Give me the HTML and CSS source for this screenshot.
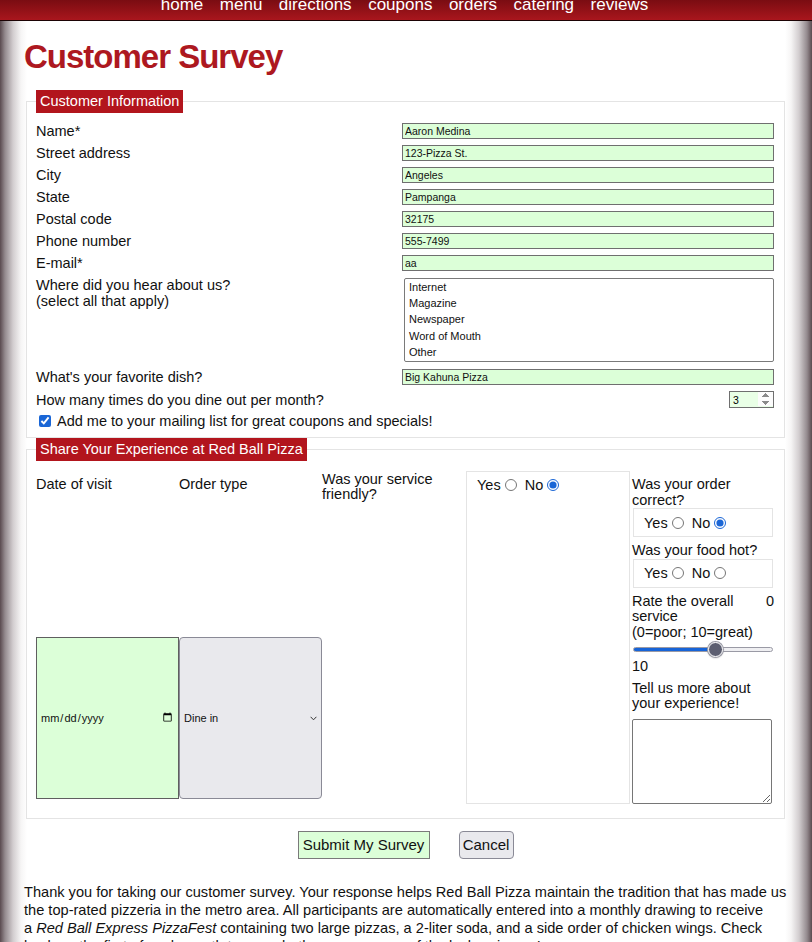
FILE: index.html
```html
<!DOCTYPE html>
<html lang="en">
<head>
<meta charset="utf-8">
<title>Customer Survey - Red Ball Pizza</title>
<link rel="stylesheet" href="styles.css">
</head>
<body>
<nav class="topnav">
  <a href="#">home</a>
  <a href="#">menu</a>
  <a href="#">directions</a>
  <a href="#">coupons</a>
  <a href="#">orders</a>
  <a href="#">catering</a>
  <a href="#">reviews</a>
</nav>
<main class="page">
  <h1 class="title">Customer Survey</h1>
  <form class="survey">
    <fieldset class="box info">
      <legend class="legend">Customer Information</legend>
      <div class="grid">
        <label class="lbl" for="f-name">Name*</label>
        <input class="txt" id="f-name" type="text" value="Aaron Medina">
        <label class="lbl" for="f-street">Street address</label>
        <input class="txt" id="f-street" type="text" value="123-Pizza St.">
        <label class="lbl" for="f-city">City</label>
        <input class="txt" id="f-city" type="text" value="Angeles">
        <label class="lbl" for="f-state">State</label>
        <input class="txt" id="f-state" type="text" value="Pampanga">
        <label class="lbl" for="f-zip">Postal code</label>
        <input class="txt" id="f-zip" type="text" value="32175">
        <label class="lbl" for="f-phone">Phone number</label>
        <input class="txt" id="f-phone" type="text" value="555-7499">
        <label class="lbl" for="f-mail">E-mail*</label>
        <input class="txt" id="f-mail" type="text" value="aa">
        <label class="lbl lbl-top" for="f-hear">Where did you hear about us?<br>(select all that apply)</label>
        <select class="list" id="f-hear" multiple size="5">
          <option>Internet</option>
          <option>Magazine</option>
          <option>Newspaper</option>
          <option>Word of Mouth</option>
          <option>Other</option>
        </select>
        <label class="lbl" for="f-dish">What's your favorite dish?</label>
        <input class="txt" id="f-dish" type="text" value="Big Kahuna Pizza">
        <label class="lbl" for="f-times">How many times do you dine out per month?</label>
        <input class="num" id="f-times" type="number" value="3" min="0">
      </div>
      <label class="check"><input type="checkbox" checked><span>Add me to your mailing list for great coupons and specials!</span></label>
    </fieldset>

    <fieldset class="box exp">
      <legend class="legend">Share Your Experience at Red Ball Pizza</legend>
      <div class="exp-grid">
        <div class="col-field">
          <label class="flbl" for="f-date">Date of visit</label>
          <input class="date" id="f-date" type="date">
        </div>
        <div class="col-field">
          <label class="flbl" for="f-type">Order type</label>
          <div class="sel-wrap">
            <select class="sel" id="f-type">
              <option>Dine in</option>
              <option>Carry out</option>
              <option>Delivery</option>
            </select>
            <svg class="chev" width="7" height="5" viewBox="0 0 7 5" aria-hidden="true"><path d="M0.6 0.8 L3.5 3.8 L6.4 0.8" fill="none" stroke="#333" stroke-width="1"/></svg>
          </div>
        </div>
        <div class="col-q">
          <span class="qlbl">Was your service friendly?</span>
        </div>
        <div class="radio-box">
          <div class="yn">
            <label class="opt"><span>Yes</span><input type="radio" name="friendly"></label>
            <label class="opt"><span>No</span><input type="radio" name="friendly" checked></label>
          </div>
        </div>
        <div class="side">
          <p class="q">Was your order correct?</p>
          <div class="mini">
            <div class="yn">
              <label class="opt"><span>Yes</span><input type="radio" name="correct"></label>
              <label class="opt"><span>No</span><input type="radio" name="correct" checked></label>
            </div>
          </div>
          <p class="q gap">Was your food hot?</p>
          <div class="mini">
            <div class="yn">
              <label class="opt"><span>Yes</span><input type="radio" name="hot"></label>
              <label class="opt"><span>No</span><input type="radio" name="hot"></label>
            </div>
          </div>
          <p class="q gap"><span class="minv">0</span>Rate the overall service<br>(0=poor; 10=great)</p>
          <input class="range" type="range" min="0" max="10" value="6" style="--fill: 60%">
          <p class="q maxv">10</p>
          <label class="q tell" for="f-more">Tell us more about your experience!</label>
          <textarea class="area" id="f-more"></textarea>
        </div>
      </div>
    </fieldset>

    <div class="actions">
      <button class="btn submit" type="submit">Submit My Survey</button>
      <button class="btn cancel" type="reset">Cancel</button>
    </div>
  </form>

  <p class="thanks">Thank you for taking our customer survey. Your response helps Red Ball Pizza maintain the tradition that has made us the top-rated pizzeria in the metro area. All participants are automatically entered into a monthly drawing to receive a&nbsp;<em>Red Ball Express PizzaFest</em> containing two large pizzas, a 2-liter soda, and a side order of chicken wings. Check back on the first of each month to see whether you are one of the lucky winners!</p>
</main>
</body>
</html>
```

FILE: styles.css
```css
* {
  box-sizing: border-box;
}

html,
body {
  margin: 0;
}

body {
  font-family: "Liberation Sans", Arial, sans-serif;
  font-size: 14.5px;
  color: #111;
  min-height: 942px;
  background: linear-gradient(to right,
    #5a4a4f 0,
    #948a8e 5px,
    #d2cdcf 13px,
    #f6f5f5 21px,
    #fff 27px,
    #fff calc(100% - 27px),
    #f6f5f5 calc(100% - 21px),
    #d2cdcf calc(100% - 13px),
    #948a8e calc(100% - 5px),
    #5a4a4f 100%);
}

/* top navigation */
.topnav {
  height: 21px;
  display: flex;
  justify-content: center;
  gap: 16.5px;
  overflow: hidden;
  background: linear-gradient(#7a0c12, #a9161d);
  border-bottom: 1px solid #1c0304;
  padding-right: 3px;
}

.topnav a {
  color: #fff;
  text-decoration: none;
  font-size: 17px;
  line-height: 9px;
}

/* page */
.page {
  padding: 0 25px 0 24px;
}

.title {
  margin: 18px 0 15px;
  font: bold 33px/36px "Liberation Sans", Arial, sans-serif;
  letter-spacing: -1px;
  color: #ad1820;
}

/* fieldsets */
.box {
  margin: 0 2px;
  padding: 10px 10px 8px 9px;
  border: 1px solid #e4e4e4;
  min-width: 0;
}

.legend {
  background: #b2151d;
  color: #fff;
  padding: 0 4px;
  font-size: 14.5px;
  line-height: 23px;
}

/* customer information */
.grid {
  display: grid;
  grid-template-columns: 1fr 372px;
  row-gap: 6px;
  align-items: center;
}

.lbl {
  line-height: 16px;
}

.lbl-top {
  align-self: start;
}

.txt {
  display: block;
  width: 100%;
  height: 16px;
  margin: 0;
  padding: 0 2px;
  border: 1px solid #6f6f6f;
  background: #dcffd8;
  font: 10.5px "Liberation Sans", Arial, sans-serif;
  color: #111;
}

.list {
  justify-self: end;
  width: 370px;
  height: 84px;
  margin: 1px 0;
  padding: 0 2px;
  border: 1px solid #7a7a7a;
  border-radius: 2px;
  background: #fff;
  font: 11px "Liberation Sans", Arial, sans-serif;
  color: #111;
  overflow: hidden;
}

.list option {
  padding: 2.1px 2px;
}

.num {
  justify-self: end;
  width: 45px;
  height: 17px;
  margin: 0;
  padding: 0 0 0 3px;
  border: 1px solid #6f6f6f;
  background: #e9ffe6;
  font: 10.5px "Liberation Sans", Arial, sans-serif;
}

.num::-webkit-inner-spin-button {
  opacity: 1;
  height: 15px;
}

.check {
  display: flex;
  align-items: center;
  margin-top: 5px;
  line-height: 16px;
}

.check input {
  width: 12px;
  height: 12px;
  margin: 0 6px 0 3px;
  accent-color: #1a66d6;
}

/* experience */
.exp {
  padding-bottom: 14px;
}

.exp-grid {
  display: grid;
  grid-template-columns: 143px 143px 144px 164px 1fr;
}

.col-field {
  display: flex;
  flex-direction: column;
  justify-content: space-between;
}

.flbl {
  padding-top: 5px;
  line-height: 16px;
}

.date {
  display: block;
  width: 143px;
  height: 162px;
  margin: 0 0 5px;
  padding: 0 3px;
  border: 1px solid #5f5f5f;
  background: #dcffd8;
  font: 11px "Liberation Sans", Arial, sans-serif;
  color: #111;
}

.sel-wrap {
  position: relative;
  margin: 0 0 5px;
}

.sel {
  -webkit-appearance: none;
  appearance: none;
  display: block;
  width: 143px;
  height: 162px;
  margin: 0;
  padding: 0 0 0 4px;
  border: 1px solid #8a8a96;
  border-radius: 4px;
  background-color: #e9e9ed;
  font: 11px "Liberation Sans", Arial, sans-serif;
  color: #111;
}

.chev {
  position: absolute;
  right: 5px;
  top: 79px;
  pointer-events: none;
}

.col-q {
  padding-top: 1px;
}

.qlbl {
  display: block;
  line-height: 15px;
}

.radio-box {
  border: 1px solid #e4e4e4;
  padding: 5px 10px;
}

.yn {
  display: flex;
  align-items: center;
  line-height: 16px;
}

.opt {
  display: flex;
  align-items: center;
}

.opt input {
  width: 12px;
  height: 12px;
  margin: 0 8px 0 4px;
  accent-color: #1a66d6;
}

.side {
  display: flex;
  flex-direction: column;
  padding: 6px 0 0 2px;
}

.q {
  margin: 0;
  line-height: 15.5px;
}

.q.gap {
  margin-top: 6px;
}

.minv {
  float: right;
}

.mini {
  height: 29px;
  margin-left: 1px;
  width: 140px;
  padding: 0 10px;
  border: 1px solid #e4e4e4;
  display: flex;
  align-items: center;
}

.range {
  -webkit-appearance: none;
  appearance: none;
  display: block;
  width: 140px;
  height: 12px;
  margin: 3px 0 0 1px;
  background: transparent;
}

.range::-webkit-slider-runnable-track {
  height: 5px;
  border-radius: 3px;
  border: 1px solid #9a9aa5;
  background: linear-gradient(to right, #1764d8 0, #1764d8 var(--fill), #efeff2 var(--fill));
}

.range::-webkit-slider-thumb {
  -webkit-appearance: none;
  appearance: none;
  width: 15px;
  height: 15px;
  margin-top: -6px;
  border-radius: 50%;
  background: #5c5e70;
  border: 1px solid #fff;
  box-shadow: 0 0 0 1px #9d9da8, 0 1px 2px rgba(0, 0, 0, 0.3);
}

.maxv {
  margin-top: 4px;
}

.tell {
  display: block;
  margin-top: 6px;
}

.area {
  display: block;
  width: 140px;
  height: 85px;
  margin: 7px 0 0;
  border: 1px solid #767676;
  border-radius: 2px;
  resize: both;
  font: 12px "Liberation Sans", Arial, sans-serif;
}

/* buttons */
.actions {
  display: flex;
  justify-content: center;
  gap: 29px;
  margin-top: 12px;
}

.btn {
  height: 28px;
  margin: 0;
  font: 15px "Liberation Sans", Arial, sans-serif;
  color: #111;
  cursor: pointer;
}

.submit {
  width: 132px;
  padding: 0 4px;
  background: #dcffd8;
  border: 1px solid #7a7a7a;
  border-radius: 0;
}

.cancel {
  width: 55px;
  padding: 0 3px;
  background: #e9e9ed;
  border: 1px solid #8a8a96;
  border-radius: 4px;
}

.thanks {
  margin: 24px 0 0;
  font-size: 14.6px;
  line-height: 18.3px;
}
```
